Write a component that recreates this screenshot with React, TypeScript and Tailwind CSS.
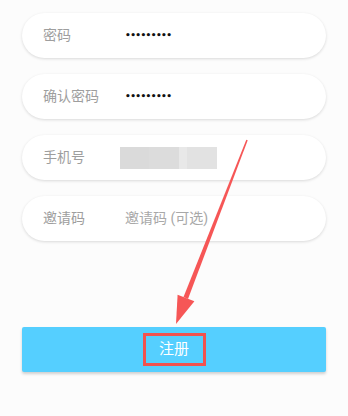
import React from "react";

const font = { fontFamily: '"Roboto", "Noto Sans CJK SC", sans-serif' };

function Row({ label, children }: { label: string; children: React.ReactNode }) {
  return (
    <div className="flex h-[45px] items-center rounded-full bg-white pl-[21px] shadow-[0_1px_3px_rgba(0,0,0,0.14)]">
      <span className="w-[82px] text-[14px] text-[#9e9e9e]">{label}</span>
      <div className="flex items-center">{children}</div>
    </div>
  );
}

const Dots = () => (
  <span
    className="text-[9px] font-bold leading-none tracking-[-0.6px] text-[#111]"
    style={{ fontFamily: '"DejaVu Sans", sans-serif' }}
  >
    •••••••••
  </span>
);

export default function App() {
  return (
    <div className="relative h-[416px] w-[348px] overflow-hidden bg-[#fcfcfc]" style={font}>
      <div className="flex flex-col gap-[16px] px-[22px] pt-[13px]">
        <Row label="密码">
          <Dots />
        </Row>
        <Row label="确认密码">
          <Dots />
        </Row>
        <Row label="手机号">
          <div className="-ml-[5px] flex h-[22px]">
            <div className="w-[29px] bg-[#dadada]" />
            <div className="w-[30px] bg-[#dcdcdc]" />
            <div className="w-[8px] bg-[#e8e8e8]" />
            <div className="w-[30px] bg-[#e2e2e2]" />
          </div>
        </Row>
        <Row label="邀请码">
          <span className="text-[14px] text-[#a8a8a8]">邀请码 (可选)</span>
        </Row>
      </div>

      <div className="mx-[22px] mt-[86px] flex h-[45px] items-center justify-center rounded-[2px] bg-[#55cfff] shadow-[0_2px_3px_rgba(0,0,0,0.18)]">
        <div className="flex h-[33px] w-[63px] items-center justify-center border-[3px] border-[#f2524f]">
          <span className="text-[15px] text-white">注册</span>
        </div>
      </div>

      <svg className="pointer-events-none absolute left-0 top-0" width="348" height="416" viewBox="0 0 348 416">
        <polygon points="246.3,139.7 247.7,140.3 188,299 183.5,297" fill="#f65656" />
        <polygon points="176,324 177.6,294.8 194.4,301.2" fill="#f65656" />
      </svg>
    </div>
  );
}
